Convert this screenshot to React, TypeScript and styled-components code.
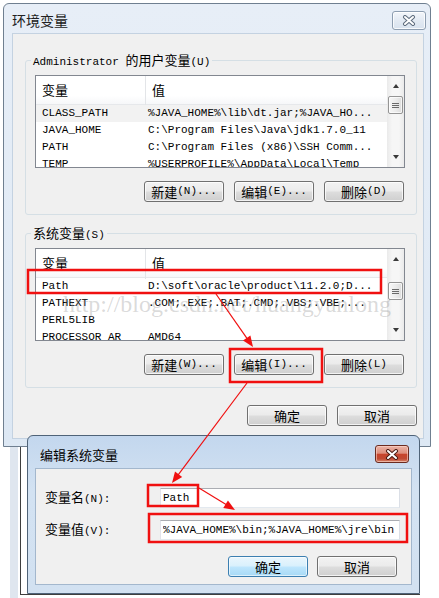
import React from 'react';
import styled, { createGlobalStyle, css } from 'styled-components';

const GlobalStyle = createGlobalStyle`
  html, body { margin: 0; padding: 0; background: #ffffff; }
  body {
    font-family: "Liberation Mono", "Noto Sans CJK SC", monospace;
    font-size: 11px;
    color: #000;
  }
  * { box-sizing: border-box; }
`;

const Page = styled.div`
  position: relative;
  width: 439px;
  height: 598px;
  overflow: hidden;
  padding: 3px 0 0 3px;
`;

const Zh = styled.span<{ $size?: number }>`
  font-family: "Noto Sans CJK SC", sans-serif;
  font-size: ${p => p.$size ?? 13}px;
`;

/* ---------- window chrome ---------- */
const Window = styled.div`
  width: 428px;
  height: 444px;
  border: 1px solid #6f7f90;
  border-radius: 6px 6px 0 0;
  background: linear-gradient(180deg, #e7eef7 0%, #dde8f4 100%);
  padding: 0 6px 7px 8px;
  display: flex;
  flex-direction: column;
`;

const TitleBar = styled.div<{ $h: number; $pl: number }>`
  flex: none;
  height: ${p => p.$h}px;
  padding-left: ${p => p.$pl}px;
  display: flex;
  align-items: flex-start;
  justify-content: space-between;
`;

const TitleText = styled.div<{ $top: number; $color: string }>`
  margin-top: ${p => p.$top}px;
  line-height: 20px;
  color: ${p => p.$color};
`;

const CloseBtn = styled.div<{ $active?: boolean; $top: number; $mr: number; $h: number }>`
  margin-top: ${p => p.$top}px;
  margin-right: ${p => p.$mr}px;
  width: 34px;
  height: ${p => p.$h}px;
  border-radius: 3px;
  display: flex;
  align-items: center;
  justify-content: center;
  ${p =>
    p.$active
      ? css`
          border: 1px solid #6b2b20;
          background: linear-gradient(180deg, #ebb3a6 0%, #dd8e7c 45%, #c7442c 52%, #c04a33 80%, #d98a70 100%);
          box-shadow: inset 0 0 0 1px rgba(255, 220, 210, 0.55);
        `
      : css`
          border: 1px solid #8d9db0;
          background: linear-gradient(180deg, #f3f6fa 0%, #e3eaf3 50%, #d8e2ee 100%);
          box-shadow: inset 0 0 0 1px rgba(255, 255, 255, 0.8);
        `}
`;

const CloseGlyph: React.FC<{ outline: string }> = ({ outline }) => (
  <svg width="14" height="11" viewBox="0 0 14 11">
    <path d="M3 2 L11 9 M11 2 L3 9" stroke={outline} strokeWidth="4" strokeLinecap="round" fill="none" />
    <path d="M3 2 L11 9 M11 2 L3 9" stroke="#ffffff" strokeWidth="2" strokeLinecap="round" fill="none" />
  </svg>
);

const Content = styled.div<{ $pad: string; $border: string }>`
  flex: 1;
  background: #f0f0f0;
  border: 1px solid ${p => p.$border};
  padding: ${p => p.$pad};
  display: flex;
  flex-direction: column;
`;

/* ---------- group box ---------- */
const Group = styled.div<{ $mt: number }>`
  position: relative;
  margin-top: ${p => p.$mt}px;
  border: 1px solid #d5dfe5;
  border-radius: 3px;
  padding: 14px 11px 12px 9px;
`;

const Legend = styled.div`
  position: absolute;
  top: -9px;
  left: 5px;
  padding: 0 2px;
  background: #f0f0f0;
  line-height: 16px;
  white-space: nowrap;
`;

/* ---------- list view ---------- */
const List = styled.div`
  height: 93px;
  border: 1px solid #828790;
  background: #ffffff;
  display: flex;
  overflow: hidden;
`;

const ListBody = styled.div`
  flex: 1;
  min-width: 0;
  display: flex;
  flex-direction: column;
  overflow: hidden;
`;

const HeaderRow = styled.div`
  flex: none;
  height: 29px;
  display: grid;
  grid-template-columns: 109px 1fr;
  background: linear-gradient(180deg, #ffffff 0%, #ffffff 70%, #f6f7f9 100%);
  border-bottom: 1px solid #e6e8eb;
`;

const HeaderCell = styled.div<{ $sep?: boolean }>`
  line-height: 28px;
  padding-left: 6px;
  ${p => p.$sep && css`border-left: 1px solid #e3e5e8;`}
`;

const Row = styled.div<{ $sel?: boolean }>`
  flex: none;
  height: 17px;
  display: grid;
  grid-template-columns: 109px 1fr;
  line-height: 17px;
  white-space: nowrap;
  background: ${p => (p.$sel ? '#f2f2f2' : 'transparent')};
`;

const Cell = styled.div<{ $pl: number }>`
  padding-left: ${p => p.$pl}px;
  overflow: hidden;
`;

const ScrollBar = styled.div`
  flex: none;
  width: 17px;
  display: flex;
  flex-direction: column;
  background: linear-gradient(90deg, #eaeaea 0%, #f6f6f6 30%, #f6f6f6 70%, #eaeaea 100%);
`;

const ArrowBtn = styled.div`
  flex: none;
  height: 20px;
  display: flex;
  align-items: center;
  justify-content: center;
`;

const Tri = styled.div<{ $down?: boolean }>`
  width: 0;
  height: 0;
  border-left: 3.5px solid transparent;
  border-right: 3.5px solid transparent;
  ${p =>
    p.$down
      ? css`border-top: 4px solid #3a3a3a;`
      : css`border-bottom: 4px solid #3a3a3a;`}
`;

const Track = styled.div`
  flex: 1;
  display: flex;
  flex-direction: column;
`;

const Thumb = styled.div<{ $offset: number }>`
  margin: ${p => p.$offset}px 0 0 1px;
  width: 15px;
  height: 18px;
  border: 1px solid #959595;
  border-radius: 2px;
  background: linear-gradient(90deg, #f7f7f7 0%, #ececec 50%, #dcdcdc 100%);
  box-shadow: inset 0 0 0 1px rgba(255, 255, 255, 0.7);
  display: flex;
  align-items: center;
  justify-content: center;
`;

const Grip = styled.div`
  width: 7px;
  height: 5px;
  background: repeating-linear-gradient(180deg, #6a6a6a 0 1px, transparent 1px 2px);
`;

/* ---------- buttons ---------- */
const ButtonRow = styled.div<{ $mt: number; $gap: number; $mr: number }>`
  margin-top: ${p => p.$mt}px;
  margin-right: ${p => p.$mr}px;
  display: flex;
  justify-content: flex-end;
  gap: ${p => p.$gap}px;
`;

const Btn = styled.div<{ $default?: boolean }>`
  width: 80px;
  height: 21px;
  border: 1px solid #707070;
  border-radius: 3px;
  background: linear-gradient(180deg, #f2f2f2 0%, #ebebeb 48%, #dddddd 52%, #cfcfcf 100%);
  box-shadow: inset 0 0 0 1px rgba(255, 255, 255, 0.75);
  display: flex;
  align-items: center;
  justify-content: center;
  line-height: 19px;
  white-space: nowrap;
  ${p =>
    p.$default &&
    css`
      border-color: #3c7fb1;
      background: linear-gradient(180deg, #eaf6fd 0%, #d9f0fc 48%, #bee6fd 52%, #a7d9f5 100%);
      box-shadow: inset 0 0 0 1px rgba(255, 255, 255, 0.6);
    `}
`;

/* ---------- lower dialog ---------- */
const Lower = styled.div`
  display: flex;
  margin-top: -12px;
`;

const Strip = styled.div`
  margin: 12px 0 0 7px;
  width: 8px;
  height: 152px;
  background: #dfe6ef;
`;

const Shot = styled.div`
  margin: 12px 0 0 2px;
  height: 148px;
  border-left: 1px solid #3e3e3e;
  border-bottom: 1px solid #3e3e3e;
  padding-left: 6px;
`;

const Dialog = styled.div`
  margin-top: -12px;
  width: 393px;
  height: 159px;
  border: 1px solid #4f6378;
  border-radius: 6px 6px 0 0;
  background: linear-gradient(180deg, #c3d7ee 0%, #d3e2f2 35%, #d2e1f1 100%);
  padding: 0 7px 8px 7px;
  display: flex;
  flex-direction: column;
`;

const Form = styled.div`
  display: grid;
  grid-template-columns: 115px 1fr;
  row-gap: 10px;
  align-items: center;
`;

const Label = styled.div`
  line-height: 20px;
  white-space: nowrap;
`;

const TextBox = styled.input`
  width: 240px;
  height: 20px;
  margin: 0;
  padding: 0 0 0 2px;
  border: 1px solid;
  border-color: #abadb3 #dbdfe6 #e3e9ef #e2e3ea;
  background: #ffffff;
  font: inherit;
  color: #000;
  outline: none;
`;

/* ---------- overlays ---------- */
const Watermark = styled.div`
  position: absolute;
  left: 63px;
  top: 292px;
  font-family: "Liberation Serif", serif;
  font-size: 24px;
  line-height: 24px;
  color: rgba(140, 140, 140, 0.32);
  white-space: nowrap;
  pointer-events: none;
`;

const Annot = styled.svg`
  position: absolute;
  left: 0;
  top: 0;
  pointer-events: none;
`;

const userVars: [string, string][] = [
  ['CLASS_PATH', '%JAVA_HOME%\\lib\\dt.jar;%JAVA_HO...'],
  ['JAVA_HOME', 'C:\\Program Files\\Java\\jdk1.7.0_11'],
  ['PATH', 'C:\\Program Files (x86)\\SSH Comm...'],
  ['TEMP', '%USERPROFILE%\\AppData\\Local\\Temp'],
];

const sysVars: [string, string][] = [
  ['Path', 'D:\\soft\\oracle\\product\\11.2.0;D...'],
  ['PATHEXT', '.COM;.EXE;.BAT;.CMD;.VBS;.VBE;...'],
  ['PERL5LIB', ''],
  ['PROCESSOR_AR', 'AMD64'],
];

const VarList: React.FC<{ rows: [string, string][]; thumb: number; sel?: number }> = ({ rows, thumb, sel }) => (
  <List>
    <ListBody>
      <HeaderRow>
        <HeaderCell><Zh>变量</Zh></HeaderCell>
        <HeaderCell $sep><Zh>值</Zh></HeaderCell>
      </HeaderRow>
      {rows.map(([k, v], i) => (
        <Row key={k} $sel={sel === i}>
          <Cell $pl={6}>{k}</Cell>
          <Cell $pl={3}>{v}</Cell>
        </Row>
      ))}
    </ListBody>
    <ScrollBar>
      <ArrowBtn><Tri /></ArrowBtn>
      <Track>
        <Thumb $offset={thumb}><Grip /></Thumb>
      </Track>
      <ArrowBtn><Tri $down /></ArrowBtn>
    </ScrollBar>
  </List>
);

const BtnLabel: React.FC<{ zh: string; en: string }> = ({ zh, en }) => (
  <>
    <Zh>{zh}</Zh>
    <span>{en}</span>
  </>
);

const arrowParts = (x1: number, y1: number, x2: number, y2: number) => {
  const dx = x2 - x1;
  const dy = y2 - y1;
  const len = Math.hypot(dx, dy);
  const ux = dx / len;
  const uy = dy / len;
  const L = 11;
  const W = 4.5;
  const bx = x2 - ux * L;
  const by = y2 - uy * L;
  return {
    line: { x1, y1, x2: bx + ux * 2, y2: by + uy * 2 },
    head: `${x2},${y2} ${bx - uy * W},${by + ux * W} ${bx + uy * W},${by - ux * W}`,
  };
};

const RED = '#f01010';

const Annotations: React.FC = () => {
  const arrows = [
    arrowParts(216, 294, 253, 347),
    arrowParts(247, 383, 172, 483),
    arrowParts(199, 488, 235, 510),
  ];
  return (
    <Annot width="439" height="598" viewBox="0 0 439 598">
      <g fill="none" stroke={RED} strokeWidth="2.5">
        <rect x="28" y="270" width="353" height="23" />
        <rect x="230" y="349" width="92" height="33" />
        <rect x="148" y="485" width="50" height="21" />
        <rect x="149" y="514" width="258" height="28" />
      </g>
      {arrows.map((a, i) => (
        <g key={i}>
          <line {...a.line} stroke={RED} strokeWidth="1.2" />
          <polygon points={a.head} fill={RED} />
        </g>
      ))}
    </Annot>
  );
};

export default function App() {
  return (
    <>
      <GlobalStyle />
      <Page>
        <Window>
          <TitleBar $h={29} $pl={0}>
            <TitleText $top={6} $color="#222">
              <Zh $size={14}>环境变量</Zh>
            </TitleText>
            <CloseBtn $top={7} $mr={-2} $h={19}>
              <CloseGlyph outline="#5d6b7c" />
            </CloseBtn>
          </TitleBar>
          <Content $pad="0 6px 0 12px" $border="#c4d2e1">
            <Group $mt={26}>
              <Legend>
                Administrator <Zh>的用户变量</Zh>(U)
              </Legend>
              <VarList rows={userVars} thumb={0} sel={0} />
              <ButtonRow $mt={13} $gap={10} $mr={1}>
                <Btn><BtnLabel zh="新建" en="(N)..." /></Btn>
                <Btn><BtnLabel zh="编辑" en="(E)..." /></Btn>
                <Btn><BtnLabel zh="删除" en="(D)" /></Btn>
              </ButtonRow>
            </Group>
            <Group $mt={18}>
              <Legend>
                <Zh>系统变量</Zh>(S)
              </Legend>
              <VarList rows={sysVars} thumb={13} />
              <ButtonRow $mt={13} $gap={10} $mr={1}>
                <Btn><BtnLabel zh="新建" en="(W)..." /></Btn>
                <Btn><BtnLabel zh="编辑" en="(I)..." /></Btn>
                <Btn><BtnLabel zh="删除" en="(L)" /></Btn>
              </ButtonRow>
            </Group>
            <ButtonRow $mt={17} $gap={10} $mr={0}>
              <Btn><Zh>确定</Zh></Btn>
              <Btn><Zh>取消</Zh></Btn>
            </ButtonRow>
          </Content>
        </Window>

        <Lower>
          <Strip />
          <Shot>
            <Dialog>
              <TitleBar $h={32} $pl={5}>
                <TitleText $top={9} $color="#000">
                  <Zh>编辑系统变量</Zh>
                </TitleText>
                <CloseBtn $active $top={9} $mr={3} $h={18}>
                  <CloseGlyph outline="#4a1c14" />
                </CloseBtn>
              </TitleBar>
              <Content $pad="18px 11px 0 9px" $border="#a3b7cd">
                <Form>
                  <Label><Zh>变量名</Zh>(N):</Label>
                  <TextBox readOnly value="Path" />
                  <Label><Zh>变量值</Zh>(V):</Label>
                  <TextBox readOnly value="%JAVA_HOME%\bin;%JAVA_HOME%\jre\bin" />
                </Form>
                <ButtonRow $mt={15} $gap={9} $mr={3}>
                  <Btn $default><Zh>确定</Zh></Btn>
                  <Btn><Zh>取消</Zh></Btn>
                </ButtonRow>
              </Content>
            </Dialog>
          </Shot>
        </Lower>

        <Watermark>http://blog.csdn.net/huangyanlong</Watermark>
        <Annotations />
      </Page>
    </>
  );
}
